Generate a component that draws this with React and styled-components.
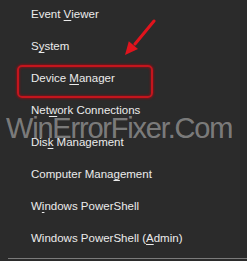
import React from 'react';
import styled, { createGlobalStyle } from 'styled-components';

const Global = createGlobalStyle`
  html, body {
    margin: 0;
    padding: 0;
    background: #2b2b2b;
  }
  body {
    width: 247px;
    height: 261px;
    overflow: hidden;
    font-family: "Liberation Sans", Arial, sans-serif;
  }
`;

//menu items, key is the underlined access letter position
const items = [
  ['Event ', 'V', 'iewer'],
  ['S', 'y', 'stem'],
  ['Device ', 'M', 'anager'],
  ['Net', 'w', 'ork Connections'],
  ['Dis', 'k', ' Management'],
  ['Computer Mana', 'g', 'ement'],
  ['W', 'i', 'ndows PowerShell'],
  ['Windows PowerShell (', 'A', 'dmin)'],
];

const App = () => {
  return (
    <Menu>
      <Global />
      <List>
        {items.map(([before, key, after], i) => (
          <Row key={i}>
            {before}<Key>{key}</Key>{after}
            {i === 2 && <Highlight />}
          </Row>
        ))}
      </List>
      <Separator />
      <Arrow width="40" height="45" viewBox="0 0 40 45">
        <line x1="31" y1="3" x2="12" y2="26" stroke="#e0141d" strokeWidth="3" strokeLinecap="round" />
        <polygon points="2,37 5.8,23.2 15,31" fill="#e0141d" />
      </Arrow>
      <Watermark>WinErrorFixer.Com</Watermark>
    </Menu>
  );
};

//Styling
const Menu = styled.div`
  position: relative;
  width: 247px;
  height: 261px;
  background: #2b2b2b;
  overflow: hidden;
`;

const List = styled.div`
  display: flex;
  flex-direction: column;
  margin-top: -2px;
`;

const Row = styled.div`
  position: relative;
  height: 32px;
  display: flex;
  align-items: center;
  padding-left: 31px;
  font-size: 11.5px;
  color: #ececec;
  white-space: pre;
`;

const Key = styled.span`
  text-decoration: underline;
  text-underline-offset: 2px;
`;

const Highlight = styled.div`
  position: absolute;
  left: 17px;
  top: 3px;
  width: 136px;
  height: 33px;
  box-sizing: border-box;
  border: 2.5px solid #c4151d;
  border-radius: 5px;
  box-shadow: 0 0 2px 1px rgba(150, 10, 18, 0.7), inset 0 0 2px 1px rgba(150, 10, 18, 0.6);
`;

const Separator = styled.div`
  margin: 4px 0 0 8px;
  height: 1px;
  background: #7a7a7a;
`;

const Arrow = styled.svg`
  position: absolute;
  left: 123px;
  top: 18px;
  filter: blur(0.4px);
`;

const Watermark = styled.div`
  position: absolute;
  left: 6px;
  top: 112px;
  font-size: 29px;
  letter-spacing: -1.2px;
  color: rgba(255, 255, 255, 0.4);
  white-space: nowrap;
  pointer-events: none;
`;

export default App;
